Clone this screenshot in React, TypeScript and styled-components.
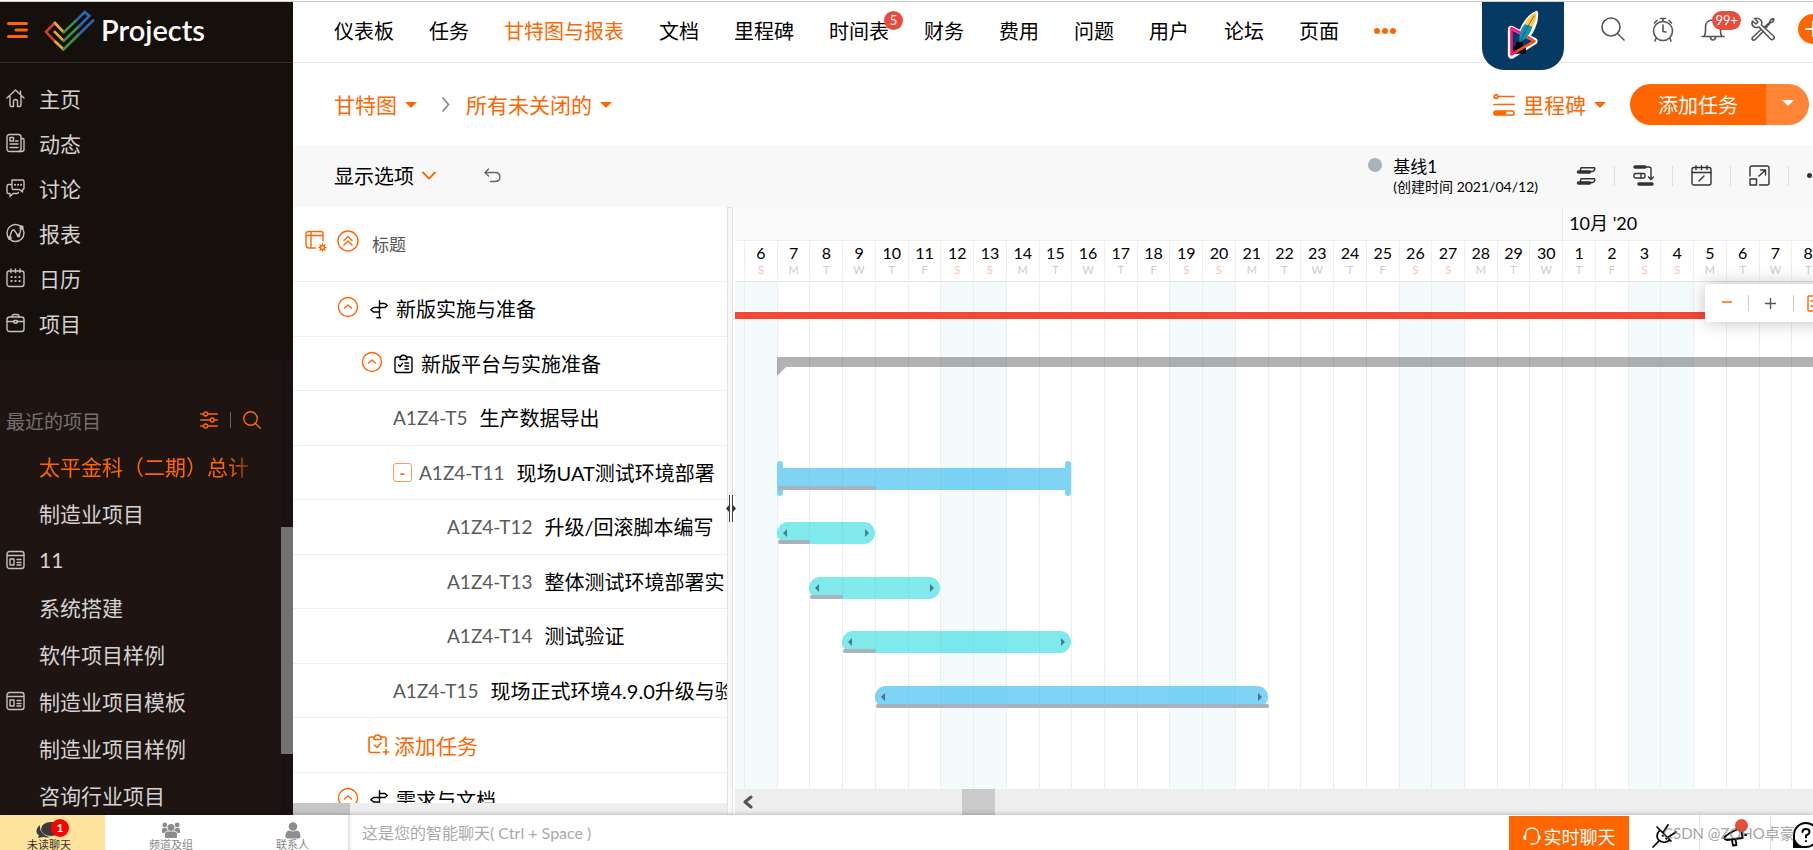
import React from "react";
import styled, { createGlobalStyle, css } from "styled-components";

const ORANGE = "#ff6600";

const GlobalStyle = createGlobalStyle`
  * { box-sizing: border-box; }
  html, body { margin: 0; height: 100%; overflow: hidden; }
  body, button, input {
    font-family: "Lato", "Noto Sans CJK SC", sans-serif;
  }
  body { background: #fff; color: #000; font-size: 20px; }
  button { border: 0; padding: 0; background: none; color: inherit; cursor: pointer; }
  a { color: inherit; text-decoration: none; }
  svg { display: block; flex: none; }
  ul { list-style: none; margin: 0; padding: 0; }
`;

/* ---------- icons ---------- */

interface IconProps {
  w?: number;
  h?: number;
  box?: string;
  sw?: number;
  children?: React.ReactNode;
}

const Icon = ({ w = 20, h = 20, box, sw = 1.4, children }: IconProps) => (
  <svg
    width={w}
    height={h}
    viewBox={box ?? `0 0 ${w} ${h}`}
    fill="none"
    stroke="currentColor"
    strokeWidth={sw}
    strokeLinecap="round"
    strokeLinejoin="round"
    aria-hidden="true"
  >
    {children}
  </svg>
);

const MenuIcon = () => (
  <Icon w={21} h={18} sw={3}>
    <path d="M1.500 2.500H19.500M9 9H19.500M1.500 15.500H19.500" />
  </Icon>
);

const LogoMark = () => (
  <svg width="53" height="43" viewBox="130 20 160 130" fill="none" strokeWidth="8" aria-hidden="true">
    <path d="M168 60L139 89L166 118" stroke="#d5382e" />
    <path d="M164 60L193 91M165 117L194 144M163 87L194 118" stroke="#e9a93a" />
    <path d="M190 93L232 53M191 143L240 95M191 118L238 73" stroke="#3c8f47" />
    <path d="M230 55L256 29L270 41L236 75M238 97L284 52" stroke="#2f66b0" />
  </svg>
);

const HomeIcon = () => (
  <Icon w={19} h={20}>
    <path d="M1 10L9.500 2L18 10M4 8.500V17Q4 18.500 5.500 18.500H7.500V13.500Q7.500 11.500 9.500 11.500T11.500 13.500V18.500H13.500Q15 18.500 15 17V8.500M14.500 6V3" />
  </Icon>
);
const FeedIcon = () => (
  <Icon w={19} h={20}>
    <rect x="1" y="1.500" width="14" height="17" rx="2.500" />
    <path d="M15.500 5.500H17Q18 5.500 18 7V16.500Q18 18.500 15.500 18.500H12M4 11H12M4 14.500H12M9.500 8H12" />
    <rect x="4" y="4.500" width="3.500" height="3.500" />
  </Icon>
);
const DiscussIcon = () => (
  <Icon w={19} h={20}>
    <path d="M6 2H16.500Q18 2 18 3.500V10Q18 11.500 16.500 11.500V14L13.500 11.500H7.500Q6 11.500 6 10ZM5 6.500H2.500Q1 6.500 1 8V14Q1 15.500 2.500 15.500H4V18.500L7 15.500H11Q12 15.500 12.500 14.500" />
    <path d="M9 6.700H9.100M12 6.700H12.100M15 6.700H15.100" strokeWidth="2" />
  </Icon>
);
const ReportIcon = () => (
  <Icon w={19} h={20}>
    <circle cx="9.500" cy="10" r="8.500" />
    <path d="M3 15.500C5 14 4.500 7.500 7 6.800S10.500 13 12.500 12.500S14 6.500 15.500 5" />
    <circle cx="15.500" cy="4.500" r="1.500" />
    <circle cx="12.500" cy="12.500" r="1.200" />
    <circle cx="3.800" cy="15" r="1.300" />
  </Icon>
);
const CalendarIcon = () => (
  <Icon w={19} h={20}>
    <rect x="1" y="3" width="17" height="15.500" rx="2.500" />
    <path d="M5 1V4.500M9.500 1V4.500M14 1V4.500" />
    <path d="M5.500 9H5.600M9.500 9H9.600M13.500 9H13.600M5.500 13H5.600M9.500 13H9.600M13.500 13H13.600" strokeWidth="2.200" />
  </Icon>
);
const BriefcaseIcon = () => (
  <Icon w={19} h={20}>
    <rect x="1" y="4" width="17" height="14.500" rx="2.500" />
    <path d="M6 4Q6 1.500 8 1.500H11Q13 1.500 13 4M1 8.500H8M11 8.500H18" />
    <rect x="8" y="7.500" width="3" height="2.500" />
  </Icon>
);
const TemplateIcon = () => (
  <Icon w={19} h={20}>
    <rect x="1" y="1.500" width="17" height="17" rx="2.500" />
    <path d="M1.500 5.500H17.500M11 9.500H15M11 12.500H15M11 15H15" />
    <rect x="4" y="9" width="4" height="6" />
  </Icon>
);
const FilterIcon = () => (
  <Icon w={18} h={18}>
    <path d="M.7 3H3.500M8 3H17.300M.7 9H10M14.500 9H17.300M.7 15H3.500M8 15H17.300" />
    <circle cx="5.700" cy="3" r="2" />
    <circle cx="12.200" cy="9" r="2" />
    <circle cx="5.700" cy="15" r="2" />
  </Icon>
);
const SearchIcon = ({ size = 24 }: { size?: number }) => (
  <Icon w={size} h={size} box="0 0 24 24" sw={size > 20 ? 1.6 : 1.9}>
    <circle cx="10" cy="10" r="9" />
    <path d="M16.500 16.500L23 23" />
  </Icon>
);
const TimerIcon = () => (
  <Icon w={22} h={25} sw={1.6}>
    <circle cx="11" cy="14" r="9.500" />
    <path d="M11 8V14.500L14 15M11 4V1.500M8.500 1.500H13.500M2.500 6L5 3.500M19.500 6L17 3.500M4 21.500L3 24M18 21.500L19 24" />
  </Icon>
);
const BellIcon = () => (
  <Icon w={24} h={24} sw={1.6}>
    <path d="M1 19.500H23M3 19.500C5 17 4.500 13 4.500 10C4.500 5.500 7.500 3 12 3S19.500 5.500 19.500 10C19.500 13 19 17 21 19.500M9.500 20Q9.500 23 12 23T14.500 20" />
  </Icon>
);
const ToolsIcon = () => (
  <Icon w={24} h={24} sw={1.6}>
    <path d="M3.500 1.500L7 5L5 7L1.500 4Q0 8.500 3.500 10Q6 11 8 10L19.500 22Q21 23.500 22.500 22T22.500 19L10.500 8Q11.500 5 9.500 2.800Q7 .5 3.500 1.500Z" />
    <path d="M10 12.500L1.500 20.500Q.5 22 1.700 22.800T4 22.700L12 14.500M13.500 10L19 5L19.500 3L22 1.500L23 2.500L21.500 5L19.500 5.500L14.800 11" />
  </Icon>
);
const FeatherLogo = () => (
  <svg width="34" height="50" viewBox="100 22 102 152" aria-hidden="true">
    <path d="M116 84L184 120L116 162Z" fill="#fff" stroke="#fff" strokeWidth="22" strokeLinejoin="round" />
    <path d="M140 125C135 95 160 45 192 32C196 60 180 100 148 125Z" fill="#fff" stroke="#fff" strokeWidth="9" strokeLinejoin="round" />
    <path d="M117 86L180 120L117 158Z" fill="#063a63" />
    <path d="M130 122H150V132L160 140V158H121V140L130 132Z" fill="#000" />
    <path d="M116 160L186 120L150 98" fill="none" stroke="#f4511e" strokeWidth="8" strokeLinejoin="round" />
    <path d="M150 98L116 80V160L134 150" fill="none" stroke="#ff0d8a" strokeWidth="8" strokeLinejoin="round" />
    <path d="M141 124C136 95 150 74 158 66L180 74C174 98 160 112 147 120Z" fill="#1590ad" />
    <path d="M157 68C166 48 178 36 191 33C194 50 188 64 180 76Z" fill="#ffc94d" />
    <path d="M142 126C152 100 164 76 186 42" fill="none" stroke="#0b3a4c" strokeWidth="2" />
  </svg>
);
const GroupByIcon = () => (
  <Icon w={22} h={24} sw={1.7}>
    <circle cx="3" cy="3.500" r="1.800" />
    <path d="M5 3.500H21M1 11.500H21" />
    <rect x="1" y="18" width="20" height="4" rx="2" />
    <path d="M2.500 20H11.500" strokeWidth="4" />
  </Icon>
);
const BarsIcon = () => (
  <Icon w={20} h={20}>
    <path d="M5 1.700H18Q19.300 1.700 18.700 3.500T16.500 5.500H4ZM5 12.700H18Q19.300 12.700 18.700 14.500T16.500 16.500H4Z" />
    <path d="M2.500 6H13.500M2.500 17H13.500" strokeWidth="3.500" />
  </Icon>
);
const DependencyIcon = () => (
  <Icon w={21} h={21}>
    <path d="M2 2H12M6 19H19" strokeWidth="3.500" />
    <path d="M13 2H16Q18 2 18 4V14M15.500 12L18 14.500L20.500 12" />
    <rect x="1" y="8.500" width="11" height="4.500" rx="1.500" />
    <path d="M8 8.500V13" />
  </Icon>
);
const DateIcon = () => (
  <Icon w={21} h={21}>
    <rect x="1" y="2.500" width="19" height="17.500" rx="2" />
    <path d="M1 7.500H20M5 .8V4.500M10.500 .8V4.500M16 .8V4.500M8 16L13 11" />
  </Icon>
);
const ExpandIcon = () => (
  <Icon w={21} h={21}>
    <path d="M1 11V3Q1 1 3 1H18Q20 1 20 3V18Q20 20 18 20H10.500M10 11L16 5.500M11.500 5H16.500V10" />
    <rect x="1" y="14" width="6.500" height="6" />
  </Icon>
);
const UndoIcon = () => (
  <Icon w={17} h={15}>
    <path d="M4.500 1L1 4.500L4.500 8M1 4.500H11Q16 4.500 16 9T11 13.500H6.500" />
  </Icon>
);
const ChevronRight = () => (
  <Icon w={8} h={15} sw={1.8}>
    <path d="M1 1L6.500 7.500L1 14" />
  </Icon>
);
const ChevronDown = () => (
  <Icon w={14} h={9} sw={1.8}>
    <path d="M1 1.500L7 7.500L13 1.500" />
  </Icon>
);
const ColumnsIcon = () => (
  <Icon w={22} h={22}>
    <path d="M10.500 18H4Q1 18 1 15V4Q1 1.500 4 1.500H16Q18 1.500 18 4V11M1 5.500H18M6 1.500V18" />
    <circle cx="17.500" cy="17.500" r="2" />
    <path d="M17.500 14V15M17.500 20V21M14 17.500H15M20 17.500H21M15 15L15.700 15.700M19.300 19.300L20 20M20 15L19.300 15.700M15 20L15.700 19.300" />
  </Icon>
);
const CollapseAllIcon = () => (
  <Icon w={22} h={22}>
    <circle cx="11" cy="11" r="10" />
    <path d="M7 10.500L11 6.500L15 10.500M7 15L11 11L15 15" />
  </Icon>
);
const CollapseIcon = () => (
  <Icon w={22} h={22}>
    <circle cx="11" cy="11" r="9.500" />
    <path d="M7.500 12L11 9L14.500 12" />
  </Icon>
);
const MilestoneIcon = () => (
  <Icon w={18} h={19}>
    <path d="M9.500 .8V17.500M7 17.800H10.500M9.500 3.500H15L17.300 5.500L15 7.500H9.500M9.500 7.500H3.500L.8 9.700L3.500 12H9.500" />
  </Icon>
);
const TaskListIcon = () => (
  <Icon w={19} h={20}>
    <path d="M5.500 3H3Q1 3 1 5V16.500Q1 18.500 3 18.500H16Q18 18.500 18 16.500V5Q18 3 16 3H13.500M6 5.500Q6 1.200 9.500 1.200T13 5.500ZM4.500 11L6 12.500L8.500 9.500M11 9H14.500M11 12H14.500M11 15H14.500" />
  </Icon>
);
const AddTaskIcon = () => (
  <Icon w={21} h={22} sw={1.6}>
    <path d="M5.500 3H3Q1 3 1 5V16.500Q1 18.500 3 18.500H11.500M13.500 3H16Q18 3 18 5V12.500M6 5.500Q6 1 9.500 1T13 5.500ZM6.500 11L9 13.500L13 9M18 15.500V20.500M15.500 18H20.500" />
  </Icon>
);
const ChatIcon = () => (
  <svg width="26" height="17" viewBox="0 0 26 17" fill="#3b3b3b" aria-hidden="true">
    <ellipse cx="15" cy="7" rx="10" ry="7" />
    <path d="M4 3C-1 7 0 12 3 13L2 16L7 15C11 16 15 15 15 15C8 15 3 9 4 3Z" />
  </svg>
);
const GroupIcon = () => (
  <svg width="18" height="17" viewBox="0 0 18 17" fill="#8c8c8c" aria-hidden="true">
    <circle cx="9" cy="5.500" r="3.500" />
    <circle cx="2.800" cy="3" r="2.400" />
    <circle cx="15.200" cy="3" r="2.400" />
    <path d="M3 15V12Q3 9.500 6 9.500H12Q15 9.500 15 12V15Q15 16 14 16H4Q3 16 3 15ZM0 8Q0 6 2 6H4.500Q5 8 6 8.700Q3 9 2.500 11H1Q0 11 0 10ZM18 8Q18 6 16 6H13.500Q13 8 12 8.700Q15 9 15.500 11H17Q18 11 18 10Z" />
  </svg>
);
const PersonIcon = () => (
  <svg width="16" height="17" viewBox="0 0 16 17" fill="#8c8c8c" aria-hidden="true">
    <circle cx="8" cy="4.500" r="4.300" />
    <path d="M.5 14.500C.5 10.500 2 8.800 4.500 8.500Q8 10.500 11.500 8.500C14 8.800 15.500 10.500 15.500 14.500Q15.500 16.500 13.500 16.500H2.500Q.5 16.500 .5 14.500Z" />
  </svg>
);
const HeadsetIcon = () => (
  <Icon w={18} h={19} sw={1.4}>
    <path d="M2.500 9V8C2.500 4 5 1 9 1S15.500 4 15.500 8V9M2.500 8.500Q1 9 1 10.500T2.500 12.500ZM15.500 8.500Q17 9 17 10.500T15.500 12.500ZM15.500 12.500Q15 17 10 17H8" />
  </Icon>
);
const PlugIcon = () => (
  <Icon w={25} h={25} sw={1.7}>
    <path d="M1 24L7 18M7 6L19 18M8 7Q3 12 6.500 17Q12 21.500 18 17M11 9.500L16 2M16.500 14L24 9M5 4L7 6M10.500 12.500L11 13M14 15.500L14.500 16" />
  </Icon>
);
const MegaphoneIcon = () => (
  <Icon w={24} h={24} sw={1.8}>
    <path d="M1.500 14L6 10.500L18 4.500L19.500 15L4 17Q1 16.500 1.500 14ZM9 17L10 22.500L13.500 22L12.500 16.500M22 12H23.500" />
  </Icon>
);
const HelpIcon = () => (
  <Icon w={26} h={26} sw={2}>
    <path d="M1 25V13A12 12 0 1 1 13 25Z" />
    <path d="M1 25V17Q3 23 9 25Z" fill="currentColor" />
    <path d="M9.500 10Q9.500 7 13 7T16.500 10Q16.500 12 13 13.500V15.500M13 19V19.200" />
  </Icon>
);

/* ---------- page frame ---------- */

const Page = styled.div`
  height: 100vh;
  display: flex;
  flex-direction: column;
  overflow: hidden;
`;
const TopLine = styled.div`
  flex: none;
  height: 2px;
  border-bottom: 1px solid #cbcbcb;
`;
const Body = styled.div`
  flex: 1;
  min-height: 0;
  display: flex;
`;

/* ---------- sidebar ---------- */

const Sidebar = styled.aside`
  flex: none;
  width: 293px;
  display: flex;
  flex-direction: column;
  background: #16100c;
  color: #d4d2d0;
`;
const Brand = styled.div`
  flex: none;
  height: 61px;
  padding: 0 8px 4px 7px;
  display: flex;
  align-items: center;
  gap: 15px;
  border-bottom: 1px solid #302b29;
  color: ${ORANGE};
`;
const BrandName = styled.a`
  display: flex;
  align-items: center;
  gap: 5px;
  color: #fff;
  font-size: 29px;
  line-height: 32px;
  font-weight: 600;
`;
const MainMenu = styled.ul`
  flex: none;
  padding: 12px 0 15px;
`;
const SideLink = styled.a<{ $tall?: boolean; $active?: boolean }>`
  display: flex;
  align-items: center;
  height: ${(p) => (p.$tall ? 47 : 45)}px;
  padding-left: 6px;
  font-size: 21px;
  white-space: nowrap;
  color: ${(p) => (p.$active ? ORANGE : "inherit")};
`;
const IconSlot = styled.span`
  flex: none;
  width: 33px;
  color: #c3c1bf;
`;
const SideText = styled.span<{ $fade?: boolean }>`
  overflow: hidden;
  ${(p) => p.$fade && css`mask-image: linear-gradient(90deg, #000 90%, transparent 105%);`}
`;
const Recent = styled.section`
  flex: 1;
  min-height: 0;
  display: flex;
  background: #1e1512;
`;
const RecentMain = styled.div`
  flex: 1;
  min-width: 0;
  overflow: hidden;
  padding-top: 38px;
`;
const RecentHead = styled.div`
  display: flex;
  align-items: center;
  height: 44px;
  padding: 0 20px 0 6px;
  color: ${ORANGE};
`;
const RecentTitle = styled.h2`
  flex: 1;
  margin: 0;
  font-size: 19px;
  font-weight: 400;
  color: #77716e;
`;
const Divider = styled.span<{ $h: number; $color: string }>`
  flex: none;
  width: 1px;
  height: ${(p) => p.$h}px;
  background: ${(p) => p.$color};
`;
const HeadTools = styled.div`
  display: flex;
  align-items: center;
  gap: 12px;
`;
const RecentList = styled.ul`
  padding-right: 31px;
`;
const SideTrack = styled.div`
  flex: none;
  width: 12px;
  display: flex;
  flex-direction: column;
  background: #1a1212;
  &::before { content: ""; flex: 167; }
  &::after { content: ""; flex: 61; }
`;
const SideThumb = styled.div`
  flex: 227;
  background: #747170;
`;

/* ---------- main header ---------- */

const Main = styled.main`
  flex: 1;
  min-width: 0;
  display: flex;
  flex-direction: column;
  overflow: hidden;
`;
const Header = styled.header`
  flex: none;
  height: 61px;
  display: flex;
  padding-left: 41px;
  border-bottom: 1px solid #e6e6e6;
`;
const Nav = styled.nav`
  flex: 1;
  height: 58px;
  display: flex;
  align-items: center;
  gap: 35px;
  white-space: nowrap;
`;
const NavLink = styled.a<{ $active?: boolean }>`
  position: relative;
  line-height: 28px;
  color: ${(p) => (p.$active ? ORANGE : "#000")};
`;
const Badge = styled.span<{ $wide?: boolean }>`
  position: absolute;
  top: ${(p) => (p.$wide ? 9 : -6)}px;
  right: ${(p) => (p.$wide ? -3 : -14)}px;
  min-width: 19px;
  padding: 0 ${(p) => (p.$wide ? 3 : 0)}px;
  border-radius: 10px;
  background: #e94b3c;
  color: #fff;
  font-size: 13px;
  line-height: 19px;
  text-align: center;
`;
const Dots = styled.span<{ $size: number; $gap: number; $color: string }>`
  display: flex;
  gap: ${(p) => p.$gap}px;
  i {
    width: ${(p) => p.$size}px;
    height: ${(p) => p.$size}px;
    border-radius: 50%;
    background: ${(p) => p.$color};
  }
`;
const AppBadge = styled.button`
  flex: none;
  width: 82px;
  height: 68px;
  display: flex;
  justify-content: center;
  padding-top: 7px;
  border-radius: 0 0 22px 22px;
  background: #063a63;
  z-index: 1;
`;
const HeaderTools = styled.div`
  flex: none;
  display: flex;
  height: 54px;
  margin: 0 -25px 0 24px;
  color: #555;
`;
const HeaderTool = styled.button`
  position: relative;
  width: 50px;
  display: flex;
  align-items: center;
  justify-content: center;
`;
const PlusCircle = styled.span`
  width: 30px;
  height: 30px;
  display: flex;
  align-items: center;
  justify-content: center;
  border-radius: 50%;
  background: ${ORANGE};
  color: #fff;
`;

/* ---------- view switch ---------- */

const ViewBar = styled.div`
  flex: none;
  height: 83px;
  display: flex;
  align-items: center;
  padding: 0 4px 0 41px;
  color: ${ORANGE};
`;
const Picker = styled.button`
  display: flex;
  align-items: center;
  gap: 8px;
  font-size: 21px;
  line-height: 30px;
`;
const Caret = styled.span`
  border: solid transparent;
  border-width: 6px 6px 0;
  border-top-color: currentColor;
`;
const Crumb = styled.span`
  padding: 0 16px 0 25px;
  color: #888;
`;
const Spacer = styled.span`
  flex: 1;
`;
const SplitButton = styled.div`
  display: flex;
  height: 41px;
  margin-left: 24px;
  border-radius: 21px;
  overflow: hidden;
  color: #fff;
`;
const AddButton = styled.button`
  width: 136px;
  background: ${ORANGE};
  font-size: 20px;
`;
const AddMenu = styled.button`
  width: 43px;
  display: flex;
  align-items: center;
  justify-content: center;
  padding-bottom: 4px;
  background: #ff8433;
`;

const Toolbar = styled.div`
  flex: none;
  height: 61px;
  display: flex;
  align-items: center;
  padding: 0 0 2px 41px;
  background: #f8f8f8;
`;
const OptionButton = styled.button`
  display: flex;
  align-items: center;
  gap: 8px;
  font-size: 20px;
  line-height: 28px;
  svg { color: ${ORANGE}; }
`;
const UndoButton = styled.button`
  margin-left: 48px;
  color: #666;
`;
const Baseline = styled.div`
  display: grid;
  grid-template-columns: 14px auto;
  column-gap: 11px;
  font-size: 17px;
  line-height: 22px;
  white-space: nowrap;
  small {
    grid-column: 2;
    font-size: 14px;
    line-height: 18px;
  }
`;
const BaselineDot = styled.span`
  width: 14px;
  height: 14px;
  margin-top: 2px;
  border-radius: 50%;
  background: #a8b4bb;
`;
const ToolSlots = styled.div`
  display: flex;
  margin: 0 -34px 0 19px;
  color: #333;
`;
const ToolSlot = styled.button`
  width: 58px;
  height: 20px;
  display: flex;
  align-items: center;
  justify-content: center;
  border-right: 1px solid #ddd;
`;

/* ---------- task list ---------- */

const Workspace = styled.div`
  flex: 1;
  min-height: 0;
  display: flex;
`;
const ListPane = styled.section`
  flex: none;
  width: 434px;
  display: flex;
  flex-direction: column;
`;
const ListClip = styled.div`
  flex: 1;
  min-height: 0;
  overflow: hidden;
`;
const TaskTable = styled.table`
  width: 100%;
  table-layout: fixed;
  border-collapse: separate;
  border-spacing: 0;
  th, td { padding: 0; border-bottom: 1px solid #eee; overflow: hidden; }
  th { height: 75px; font-size: 17px; font-weight: 400; color: #555; }
  td { height: 54px; }
  tr:nth-child(odd) > td { height: 55px; }
`;
const HeadCell = styled.div`
  display: flex;
  align-items: center;
  gap: 10px;
  padding: 0 0 6px 12px;
  color: ${ORANGE};
  span { margin-left: 3px; padding-top: 4px; color: #555; }
`;
const TaskCell = styled.div<{ $indent: number; $gap: number }>`
  display: flex;
  align-items: center;
  gap: ${(p) => p.$gap}px;
  padding-left: ${(p) => p.$indent}px;
  line-height: 30px;
  white-space: nowrap;
`;
const TaskCode = styled.span`
  margin-right: 5px;
  font-size: 19px;
  color: #5a5a5a;
`;
const ToggleButton = styled.button`
  flex: none;
  margin-right: 3px;
  padding-bottom: 4px;
  color: ${ORANGE};
`;
const MinusBox = styled.button`
  flex: none;
  width: 19px;
  height: 19px;
  border: 1px solid #ff9a5c;
  border-radius: 3px;
  color: ${ORANGE};
  font-size: 16px;
  font-weight: 700;
  line-height: 14px;
`;
const AddTaskLink = styled.button`
  display: flex;
  align-items: center;
  gap: 5px;
  color: ${ORANGE};
  font-size: 21px;
`;
const ListScroll = styled.div`
  flex: none;
  height: 12px;
  background: #eee;
  &::before { content: ""; display: block; width: 57px; height: 100%; background: #c6c6c6; }
`;
const Splitter = styled.div`
  position: relative;
  flex: none;
  width: 6px;
  margin-right: 2px;
  border: 1px solid #e3e3e3;
  background: #f8f8f8;
  z-index: 2;
  svg { position: absolute; top: 287px; left: -2px; }
`;

/* ---------- gantt chart ---------- */

const ChartPane = styled.section`
  position: relative;
  flex: 1;
  min-width: 0;
  display: flex;
  flex-direction: column;
  overflow: hidden;
`;
const dayGrid = css`
  display: grid;
  grid-template-columns: 9px repeat(33, minmax(0, 1fr));
  margin-right: -11px;
`;
const Months = styled.div`
  ${dayGrid}
  flex: none;
  height: 34px;
  background: #fafafa;
  border-bottom: 1px solid #eee;
`;
const Month = styled.span`
  grid-column: 27 / span 8;
  padding-left: 6px;
  border-left: 1px solid #e6e6e6;
  font-size: 18px;
  line-height: 32px;
`;
const Days = styled.div`
  ${dayGrid}
  flex: none;
  height: 41px;
  padding-bottom: 2px;
  border-bottom: 1px solid #e6e6e6;
`;
const Day = styled.div<{ $off: boolean }>`
  padding-top: 3px;
  border-left: 1px solid #eee;
  text-align: center;
  font-size: 16px;
  line-height: 18px;
  small {
    display: block;
    margin-top: 1px;
    font-size: 11px;
    line-height: 14px;
    color: ${(p) => (p.$off ? "#ffbcb8" : "#ccc")};
  }
`;
const Canvas = styled.div`
  position: relative;
  flex: 1;
  min-height: 0;
  overflow: hidden;
`;
const Stripes = styled.div`
  ${dayGrid}
  height: 100%;
`;
const Stripe = styled.span<{ $off: boolean; $first?: boolean }>`
  border-left: ${(p) => (p.$first ? 0 : 1)}px solid #eee;
  background: ${(p) => (p.$off ? "#f3fbfd" : "transparent")};
`;
const BarLayer = styled.div`
  position: absolute;
  inset: 0;
`;
const BarRow = styled.div`
  ${dayGrid}
  height: 54px;
  align-items: start;
  &:nth-child(odd) { height: 55px; }
`;
const MilestoneBar = styled.div`
  grid-column: 1 / -1;
  height: 7px;
  margin-top: 30px;
  background: #f54735;
`;
const ListBar = styled.div`
  grid-column: 3 / -1;
  margin-top: 20px;
  border-top: 10px solid rgba(0, 0, 0, 0.3);
  &::after {
    content: "";
    display: block;
    width: 0;
    border-top: 9px solid rgba(0, 0, 0, 0.3);
    border-right: 9px solid transparent;
  }
`;
const TaskBar = styled.div<{ $from: number; $days: number; $color: string; $parent?: boolean }>`
  position: relative;
  grid-column: ${(p) => p.$from - 4} / span ${(p) => p.$days};
  height: 22px;
  margin-top: 22px;
  display: flex;
  align-items: center;
  justify-content: space-between;
  padding: 0 6px;
  border-radius: ${(p) => (p.$parent ? 0 : 11)}px;
  background: ${(p) => p.$color};
  color: rgba(0, 0, 0, 0.45);
`;
const EndCap = styled.span<{ $right?: boolean }>`
  position: absolute;
  top: -7px;
  ${(p) => (p.$right ? "right: 0;" : "left: 0;")}
  width: 6px;
  height: 35px;
  border-radius: 3px;
  background: #7dd4f5;
`;
const Handle = styled.span<{ $right?: boolean }>`
  border: 4px solid transparent;
  border-width: 4px ${(p) => (p.$right ? 0 : 4)}px 4px ${(p) => (p.$right ? 4 : 0)}px;
  ${(p) => (p.$right ? "border-left-color" : "border-right-color")}: currentColor;
`;
const Progress = styled.span`
  position: absolute;
  left: 1px;
  bottom: 0;
  height: 4px;
  border-radius: 2px;
  background: #a9b2bb;
`;
const ZoomBox = styled.div`
  position: absolute;
  top: 77px;
  right: -24px;
  width: 132px;
  height: 38px;
  display: flex;
  align-items: center;
  border-radius: 3px;
  background: #fff;
  box-shadow: 0 0 18px rgba(0, 0, 0, 0.25);
`;
const ZoomButton = styled.button<{ $active?: boolean }>`
  flex: 1;
  height: 16px;
  display: flex;
  align-items: center;
  justify-content: center;
  color: ${(p) => (p.$active ? ORANGE : "#555")};
  & + & { border-left: 1px solid #ccc; }
`;
const ChartScroll = styled.div`
  flex: none;
  height: 26px;
  display: flex;
  align-items: center;
  padding-left: 7px;
  background: #eee;
  color: #555;
`;
const ChartThumb = styled.span`
  width: 33px;
  height: 26px;
  margin-left: 209px;
  background: #cacaca;
`;

/* ---------- chat bar ---------- */

const ChatBar = styled.footer`
  position: relative;
  flex: none;
  height: 35px;
  display: flex;
  background: #fff;
  box-shadow: 0 0 5px rgba(0, 0, 0, 0.3);
  z-index: 3;
`;
const ChatTab = styled.button<{ $w: number; $active?: boolean }>`
  flex: none;
  width: ${(p) => p.$w}px;
  height: 38px;
  display: flex;
  flex-direction: column;
  align-items: center;
  padding: 7px ${(p) => (p.$active ? 7 : 0)}px 0 0;
  background: ${(p) => (p.$active ? "#ffe29c" : "#fff")};
  color: ${(p) => (p.$active ? "#333" : "#888")};
  font-size: 11px;
  line-height: 12px;
`;
const ChatIconBox = styled.span`
  position: relative;
  height: 17px;
`;
const Unread = styled.b`
  position: absolute;
  top: -3px;
  right: -7px;
  width: 18px;
  height: 18px;
  border-radius: 50%;
  background: #f00;
  color: #fff;
  font-size: 12px;
  line-height: 18px;
  text-align: center;
`;
const ChatInput = styled.input`
  flex: 1;
  min-width: 0;
  height: 35px;
  padding: 0 14px 1px;
  border: 0;
  outline: 0;
  font-size: 16px;
  box-shadow: inset 4px 0 4px -3px rgba(0, 0, 0, 0.2);
  &::placeholder { color: #aaa; opacity: 1; }
`;
const LiveChat = styled.button`
  flex: none;
  width: 120px;
  height: 40px;
  margin-top: 1px;
  display: flex;
  align-items: center;
  justify-content: center;
  gap: 3px;
  background: ${ORANGE};
  color: #fff;
  font-size: 18px;
`;
const FooterTools = styled.div`
  position: relative;
  flex: none;
  display: flex;
  margin-right: -29px;
`;
const FooterTool = styled.button`
  position: relative;
  width: 71px;
  height: 40px;
  display: flex;
  align-items: center;
  justify-content: center;
  border-right: 1px solid #e6e6e6;
`;
const RedDot = styled.i`
  position: absolute;
  top: 4px;
  right: 22px;
  width: 13px;
  height: 13px;
  border-radius: 50%;
  background: #e94b3c;
`;
const Watermark = styled.span`
  position: absolute;
  left: 34px;
  top: 6px;
  font-size: 15px;
  line-height: 24px;
  white-space: nowrap;
  color: rgba(110, 110, 110, 0.65);
`;

/* ---------- data ---------- */

const menu: [string, React.ReactNode][] = [
  ["主页", <HomeIcon />],
  ["动态", <FeedIcon />],
  ["讨论", <DiscussIcon />],
  ["报表", <ReportIcon />],
  ["日历", <CalendarIcon />],
  ["项目", <BriefcaseIcon />],
];

const recent = [
  { name: "太平金科（二期）总计", active: true },
  { name: "制造业项目" },
  { name: "11", template: true },
  { name: "系统搭建" },
  { name: "软件项目样例" },
  { name: "制造业项目模板", template: true },
  { name: "制造业项目样例" },
  { name: "咨询行业项目" },
];

const navItems = ["仪表板", "任务", "甘特图与报表", "文档", "里程碑", "时间表", "财务", "费用", "问题", "用户", "论坛", "页面"];

const tasks = [
  { code: "A1Z4-T5", name: "生产数据导出", indent: 100 },
  { code: "A1Z4-T11", name: "现场UAT测试环境部署", indent: 100, parent: true },
  { code: "A1Z4-T12", name: "升级/回滚脚本编写", indent: 154 },
  { code: "A1Z4-T13", name: "整体测试环境部署实", indent: 154 },
  { code: "A1Z4-T14", name: "测试验证", indent: 154 },
  { code: "A1Z4-T15", name: "现场正式环境4.9.0升级与验", indent: 100 },
];

const BLUE = "rgba(0, 170, 236, 0.5)";
const CYAN = "rgba(0, 212, 218, 0.5)";

const bars = [
  { from: 7, days: 9, done: 3, color: BLUE, parent: true },
  { from: 7, days: 3, done: 1, color: CYAN },
  { from: 8, days: 4, done: 1, color: CYAN },
  { from: 9, days: 7, done: 1, color: CYAN },
  { from: 10, days: 12, done: 12, color: BLUE },
];

const days = Array.from({ length: 33 }, (_, i) => {
  const letter = "SMTWTFS"[i % 7];
  return { num: i < 25 ? i + 6 : i - 24, letter, off: letter === "S" };
});

export default function App() {
  return (
    <>
      <GlobalStyle />
      <Page>
        <TopLine />
        <Body>
          <Sidebar>
            <Brand>
              <button aria-label="菜单"><MenuIcon /></button>
              <BrandName href="#"><LogoMark />Projects</BrandName>
            </Brand>
            <MainMenu>
              {menu.map(([label, icon]) => (
                <li key={label}>
                  <SideLink href="#"><IconSlot>{icon}</IconSlot>{label}</SideLink>
                </li>
              ))}
            </MainMenu>
            <Recent>
              <RecentMain>
                <RecentHead>
                  <RecentTitle>最近的项目</RecentTitle>
                  <HeadTools>
                    <button aria-label="筛选"><FilterIcon /></button>
                    <Divider $h={16} $color="#6b6562" />
                    <button aria-label="搜索项目"><SearchIcon size={18} /></button>
                  </HeadTools>
                </RecentHead>
                <RecentList>
                  {recent.map((r) => (
                    <li key={r.name}>
                      <SideLink href="#" $tall $active={r.active}>
                        <IconSlot>{r.template && <TemplateIcon />}</IconSlot>
                        <SideText $fade={r.active}>{r.name}</SideText>
                      </SideLink>
                    </li>
                  ))}
                </RecentList>
              </RecentMain>
              <SideTrack><SideThumb /></SideTrack>
            </Recent>
          </Sidebar>

          <Main>
            <Header>
              <Nav>
                {navItems.map((n) => (
                  <NavLink key={n} href="#" $active={n === "甘特图与报表"}>
                    {n}
                    {n === "时间表" && <Badge>5</Badge>}
                  </NavLink>
                ))}
                <button aria-label="更多">
                  <Dots $size={6} $gap={2} $color={ORANGE}><i /><i /><i /></Dots>
                </button>
              </Nav>
              <AppBadge aria-label="应用"><FeatherLogo /></AppBadge>
              <HeaderTools>
                <HeaderTool aria-label="搜索"><SearchIcon /></HeaderTool>
                <HeaderTool aria-label="计时器"><TimerIcon /></HeaderTool>
                <HeaderTool aria-label="通知"><BellIcon /><Badge $wide>99+</Badge></HeaderTool>
                <HeaderTool aria-label="设置"><ToolsIcon /></HeaderTool>
                <HeaderTool aria-label="新建">
                  <PlusCircle><Icon w={16} h={16} sw={2}><path d="M1 8H15M8 1V15" /></Icon></PlusCircle>
                </HeaderTool>
              </HeaderTools>
            </Header>

            <ViewBar>
              <Picker>甘特图<Caret /></Picker>
              <Crumb><ChevronRight /></Crumb>
              <Picker>所有未关闭的<Caret /></Picker>
              <Spacer />
              <Picker><GroupByIcon />里程碑<Caret /></Picker>
              <SplitButton>
                <AddButton>添加任务</AddButton>
                <AddMenu aria-label="更多添加选项"><Caret /></AddMenu>
              </SplitButton>
            </ViewBar>

            <Toolbar>
              <OptionButton>显示选项<ChevronDown /></OptionButton>
              <UndoButton aria-label="撤销"><UndoIcon /></UndoButton>
              <Spacer />
              <Baseline>
                <BaselineDot />
                <span>基线1</span>
                <small>(创建时间 2021/04/12)</small>
              </Baseline>
              <ToolSlots>
                <ToolSlot aria-label="基线"><BarsIcon /></ToolSlot>
                <ToolSlot aria-label="依赖"><DependencyIcon /></ToolSlot>
                <ToolSlot aria-label="日期"><DateIcon /></ToolSlot>
                <ToolSlot aria-label="全屏"><ExpandIcon /></ToolSlot>
                <ToolSlot aria-label="更多操作">
                  <Dots $size={5} $gap={3} $color="#333"><i /><i /><i /></Dots>
                </ToolSlot>
              </ToolSlots>
            </Toolbar>

            <Workspace>
              <ListPane>
                <ListClip>
                  <TaskTable>
                    <thead>
                      <tr>
                        <th>
                          <HeadCell><ColumnsIcon /><CollapseAllIcon /><span>标题</span></HeadCell>
                        </th>
                      </tr>
                    </thead>
                    <tbody>
                      <tr>
                        <td>
                          <TaskCell $indent={44} $gap={8}>
                            <ToggleButton aria-label="折叠"><CollapseIcon /></ToggleButton>
                            <MilestoneIcon />新版实施与准备
                          </TaskCell>
                        </td>
                      </tr>
                      <tr>
                        <td>
                          <TaskCell $indent={68} $gap={8}>
                            <ToggleButton aria-label="折叠"><CollapseIcon /></ToggleButton>
                            <TaskListIcon />新版平台与实施准备
                          </TaskCell>
                        </td>
                      </tr>
                      {tasks.map((t) => (
                        <tr key={t.code}>
                          <td>
                            <TaskCell $indent={t.indent} $gap={7}>
                              {t.parent && <MinusBox aria-label="折叠子任务">-</MinusBox>}
                              <TaskCode>{t.code}</TaskCode>
                              <span>{t.name}</span>
                            </TaskCell>
                          </td>
                        </tr>
                      ))}
                      <tr>
                        <td>
                          <TaskCell $indent={75} $gap={0}>
                            <AddTaskLink><AddTaskIcon />添加任务</AddTaskLink>
                          </TaskCell>
                        </td>
                      </tr>
                      <tr>
                        <td>
                          <TaskCell $indent={44} $gap={8}>
                            <ToggleButton aria-label="折叠"><CollapseIcon /></ToggleButton>
                            <MilestoneIcon />需求与文档
                          </TaskCell>
                        </td>
                      </tr>
                    </tbody>
                  </TaskTable>
                </ListClip>
                <ListScroll />
              </ListPane>
              <Splitter>
                <svg width="10" height="27" viewBox="0 0 10 27" aria-hidden="true">
                  <path d="M3.500 0V27M6.500 0V27" stroke="#444" />
                  <path d="M3 10V17L0 13.500ZM7 10V17L10 13.500Z" fill="#333" />
                </svg>
              </Splitter>

              <ChartPane>
                <Months><Month>10月 '20</Month></Months>
                <Days>
                  <span />
                  {days.map((d, i) => (
                    <Day key={i} $off={d.off}>
                      {d.num}
                      <small>{d.letter}</small>
                    </Day>
                  ))}
                </Days>
                <Canvas>
                  <Stripes>
                    <Stripe $off $first />
                    {days.map((d, i) => <Stripe key={i} $off={d.off} />)}
                  </Stripes>
                  <BarLayer>
                    <BarRow><MilestoneBar /></BarRow>
                    <BarRow><ListBar /></BarRow>
                    <BarRow />
                    {bars.map((b, i) => (
                      <BarRow key={i}>
                        <TaskBar $from={b.from} $days={b.days} $color={b.color} $parent={b.parent}>
                          {b.parent ? (
                            <><EndCap /><EndCap $right /></>
                          ) : (
                            <><Handle /><Handle $right /></>
                          )}
                          <Progress style={{ width: `${(b.done / b.days) * 100}%` }} />
                        </TaskBar>
                      </BarRow>
                    ))}
                  </BarLayer>
                </Canvas>
                <ZoomBox>
                  <ZoomButton $active aria-label="缩小"><Icon w={10} h={10}><path d="M0 4H10" /></Icon></ZoomButton>
                  <ZoomButton aria-label="放大"><Icon w={11} h={11}><path d="M.5 5.500H10.500M5.500 .5V10.500" /></Icon></ZoomButton>
                  <ZoomButton $active aria-label="刻度">
                    <Icon w={16} h={17}><rect x="1" y="1" width="14" height="15" rx="1" /><path d="M4 6H12M4 11H12" /></Icon>
                  </ZoomButton>
                </ZoomBox>
                <ChartScroll>
                  <Icon w={11} h={14} sw={3}><path d="M9 2L3 7L9 12" /></Icon>
                  <ChartThumb />
                </ChartScroll>
              </ChartPane>
            </Workspace>
          </Main>
        </Body>

        <ChatBar>
          <ChatTab $w={105} $active>
            <ChatIconBox><ChatIcon /><Unread>1</Unread></ChatIconBox>未读聊天
          </ChatTab>
          <ChatTab $w={132}><ChatIconBox><GroupIcon /></ChatIconBox>频道及组</ChatTab>
          <ChatTab $w={111}><ChatIconBox><PersonIcon /></ChatIconBox>联系人</ChatTab>
          <ChatInput aria-label="智能聊天" placeholder="这是您的智能聊天( Ctrl + Space )" />
          <LiveChat><HeadsetIcon />实时聊天</LiveChat>
          <FooterTools>
            <FooterTool aria-label="连接"><PlugIcon /></FooterTool>
            <FooterTool aria-label="公告"><MegaphoneIcon /><RedDot /></FooterTool>
            <FooterTool aria-label="帮助"><HelpIcon /></FooterTool>
            <Watermark>CSDN @ZOHO卓豪</Watermark>
          </FooterTools>
        </ChatBar>
      </Page>
    </>
  );
}
